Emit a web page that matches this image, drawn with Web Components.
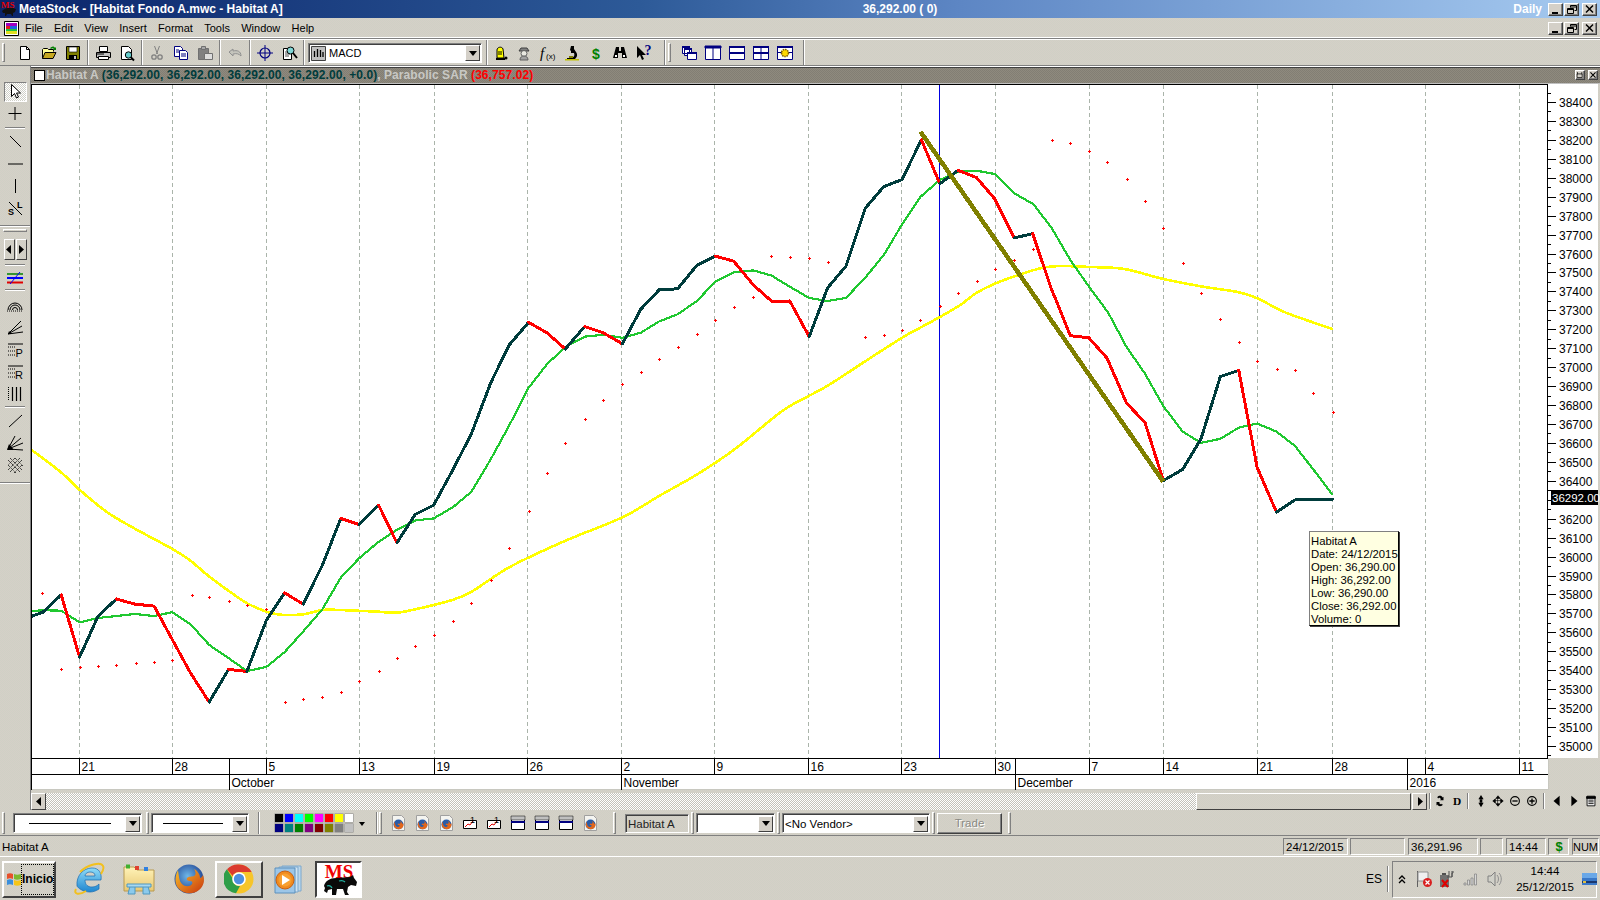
<![CDATA[<!DOCTYPE html>
<html><head><meta charset="utf-8"><title>MetaStock</title>
<style>
html,body{margin:0;padding:0;width:1600px;height:900px;overflow:hidden;background:#d2cfc7;font:11.5px "Liberation Sans",Arial,sans-serif;color:#000}
</style>
<script>
const FONT='"Liberation Sans",Arial,sans-serif';
const DITHER='background:repeating-conic-gradient(#d6cfc8 0 25%,#cfd1c5 0 50%) 0 0/2px 2px;';
function def(name,css,html){
  customElements.define(name,class extends HTMLElement{
    constructor(){super();const r=this.attachShadow({mode:'open'});
      r.innerHTML='<style>'+css+'</style>'+(typeof html==='function'?html(this):html);}
  });
}
const fx=(s)=>`<svg width="${s}" height="${s}" viewBox="0 0 32 32"><defs><radialGradient id="fg" cx=".45" cy=".4" r=".6"><stop offset="0" stop-color="#6fb7e8"/><stop offset="1" stop-color="#1d3f8f"/></radialGradient><linearGradient id="ff" x1="0" y1="0" x2="1" y2="1"><stop offset="0" stop-color="#f9c02a"/><stop offset="1" stop-color="#c8360e"/></linearGradient></defs><circle cx="16" cy="16" r="14.5" fill="url(#fg)"/><path d="M5 7C2 13 1 21 6 26c5 5 14 6 20 1 5-4 6-10 4-15-1 2-2 3-3 3 0-3-2-7-6-9 2 3 2 6 0 7-2 1-5 0-7 2-1 2 1 3 3 3 2 0 3 1 2 3-2 3-7 3-10 0-3-3-3-8-4-14z" fill="url(#ff)"/></svg>`;
const I={
 new:`<path d="M3.5 1.5h6l3 3v10h-9z" fill="#fff" stroke="#000"/><path d="M9.5 1.5v3h3" fill="none" stroke="#000"/>`,
 open:`<path d="M1.5 13.5v-9l1-1h4l1 1h5v2" fill="#ffff99" stroke="#000"/><path d="M1.5 13.5l2.500-6h11l-3 6z" fill="#c6a820" stroke="#000"/><path d="M9 3c2-2 4-2 5 0l1-1v3h-3l1-1c-1-1-2-1-3 0z" fill="#008000"/>`,
 save:`<path d="M1.500 1.500h13v13h-13z" fill="#808000" stroke="#000"/><path d="M4 2h8v5H4z" fill="#fff" stroke="#000" stroke-width=".6"/><path d="M4 10h8v5H4z" fill="#000"/><path d="M9 11h2v3H9z" fill="#c0c0c0"/>`,
 print:`<path d="M4.500 1.500h8v5h-8z" fill="#fff" stroke="#000"/><path d="M1.500 7.500h14v5h-14z" fill="#c0c0c0" stroke="#000"/><path d="M3.500 11.500h10v3h-10z" fill="#fff" stroke="#000"/><path d="M2 9h7" stroke="#000"/>`,
 prev:`<path d="M2.500 1.500h7l3 3v10h-10z" fill="#fff" stroke="#000"/><circle cx="9.500" cy="10" r="3.200" fill="#66cccc" stroke="#000"/><path d="M12 12.500l3 3" stroke="#000" stroke-width="2"/>`,
 cut:`<path d="M5.500 1l3 8m2-8l-3 8" stroke="#808080" fill="none"/><circle cx="5" cy="12" r="2.200" fill="none" stroke="#808080" stroke-width="1.300"/><circle cx="11" cy="12" r="2.200" fill="none" stroke="#808080" stroke-width="1.300"/>`,
 copy:`<path d="M1.500 1.500h6l2 2v8h-8z" fill="#fff" stroke="#000080"/><path d="M6.500 5.500h6l2 2v7h-8z" fill="#fff" stroke="#000080"/><path d="M8 9h5M8 11h5" stroke="#000080"/><path d="M3 5h3M3 7h3" stroke="#000080"/>`,
 paste:`<path d="M1.500 3.500h10v11h-10z" fill="#808080" stroke="#707070"/><path d="M4.500 1.500h4v3h-4z" fill="#a8a8a8" stroke="#707070"/><path d="M7.500 8.500h8v6h-8z" fill="#ddd" stroke="#707070"/>`,
 undo:`<path d="M2 7l4-3v2c4-1 8 0 8 5-2-2-4-3-8-2v2z" fill="#c4c4bc" stroke="#909090"/>`,
 cross:`<circle cx="8" cy="8" r="5" fill="none" stroke="#000080" stroke-width="1.200"/><path d="M8 0v16M0 8h16" stroke="#000080"/>`,
 find:`<path d="M2.500 3.500h8v11h-8z" fill="#fff" stroke="#000"/><path d="M4 7h5M4 9h5M4 11h4" stroke="#000" stroke-width=".7"/><circle cx="9.500" cy="5.500" r="3.500" fill="#7fd6d6" stroke="#000"/><path d="M12 8l4 5" stroke="#000" stroke-width="2"/>`,
 alarm:`<path d="M5 13V5c0-3 5-4 6-1l1 9z" fill="#ffff00" stroke="#000"/><path d="M4 13h9v2H4z" fill="#000"/><path d="M7 6v4M9 6v4" stroke="#000"/><circle cx="14" cy="13" r="1.500" fill="#000"/>`,
 wizard:`<path d="M3 6h10L11 3H5z" fill="#808080" stroke="#404040"/><circle cx="8" cy="8.500" r="3" fill="#e8e8e0" stroke="#606060"/><path d="M4 15c0-3 2-4 4-4s4 1 4 4z" fill="#a0a0a0" stroke="#606060"/>`,
 fx:`<text x="0" y="13" font-family="Liberation Serif,serif" font-style="italic" font-size="15" fill="#000">f</text><text x="6" y="14" font-family="Liberation Sans,sans-serif" font-size="8" fill="#000">(x)</text>`,
 micro:`<path d="M7 1h3v3l2 3c2 3 1 5-1 7H3v-1h5c2-1 3-3 2-5H7v-2l-1-1z" fill="#000"/><path d="M1 14h14v1.500H1z" fill="#c0c000"/><path d="M5 11h4v2H5z" fill="#808000"/>`,
 dollar:`<text x="8" y="13.500" text-anchor="middle" font-family="Liberation Sans,sans-serif" font-weight="700" font-size="14" fill="#008000">$</text>`,
 binoc:`<path d="M4 2h3v4h2V2h3l3 11h-5V8H6v5H1z" fill="#000"/><path d="M3 10h2v2H3zM11 10h2v2h-2z" fill="#fff"/>`,
 helpq:`<path d="M1 1l0 12 3-3 2 5 2-1-2-4h4z" fill="#000"/><text x="12" y="10" text-anchor="middle" font-family="Liberation Serif,serif" font-weight="700" font-size="14" fill="#000080">?</text>`,
 casc:`<path d="M1.500 1.500h7v7h-7zM3.500 3.500h7v7h-7z" fill="#fff" stroke="#000080"/><path d="M6.500 7.500h9v7h-9z" fill="#fff" stroke="#000080"/><path d="M1 1h8v2H1zM3 3h8v2H3zM6 7h10v2H6z" fill="#000080"/>`,
 tilev:`<path d="M.500 1.500h15v13H.500z" fill="#fff" stroke="#000080"/><path d="M0 1h16v2H0zM8 1v14" stroke="#000080" fill="#000080"/>`,
 tileh:`<path d="M.500 1.500h15v13H.500z" fill="#fff" stroke="#000080"/><path d="M0 1h16v2H0zM0 7h16v2H0z" fill="#000080"/>`,
 tile4:`<path d="M.500 1.500h15v13H.500z" fill="#fff" stroke="#000080"/><path d="M0 1h16v2H0zM0 7h16v2H0z" fill="#000080"/><path d="M8 1v14" stroke="#000080"/>`,
 tilegear:`<path d="M.500 1.500h15v13H.500z" fill="#fff" stroke="#000080"/><path d="M0 1h16v2H0zM0 7h16v1H0z" fill="#000080"/><circle cx="8" cy="8" r="3.500" fill="#ffd800" stroke="#806000" stroke-dasharray="1.500 .8" stroke-width="1.600"/>`,
 arrow:`<path d="M4.500 .5v12l3-3 2 4.500 2-1-2-4h4z" fill="#fff" stroke="#000"/>`,
 plus:`<path d="M8 1v13M1.500 7.500h13" stroke="#000"/>`,
 diag:`<path d="M3 2l11 11" stroke="#000"/>`,
 hor:`<path d="M1 8h15" stroke="#000"/>`,
 ver:`<path d="M8.500 1v14" stroke="#000"/>`,
 sl:`<path d="M2 2l13 13" stroke="#000"/><text x="10" y="7.500" font-family="Liberation Sans,sans-serif" font-weight="700" font-size="9" fill="#000">L</text><text x="1" y="15" font-family="Liberation Sans,sans-serif" font-weight="700" font-size="9" fill="#000">S</text>`,
 trend:`<path d="M0 4h16" stroke="#008000" stroke-width="1.500"/><path d="M0 8h16" stroke="#0000ff" stroke-width="2"/><path d="M0 12.500h16" stroke="#e00000" stroke-width="2"/><path d="M3 14L13 2" stroke="#0000ff"/>`,
 arcs:`<path d="M1 12a7 7 0 0 1 14 0M3 12a5 5 0 0 1 10 0M5.500 12a2.500 2.500 0 0 1 5 0" fill="none" stroke="#000"/><path d="M0 13h16" stroke="#000" stroke-dasharray="1 1"/>`,
 fan:`<path d="M1 14L14 1M1 14L15 6M1 14l15-2" stroke="#000" fill="none"/><path d="M1 14h4l-3-3z" fill="#000"/>`,
 retP:`<path d="M1 2h15" stroke="#000"/><path d="M1 5h8M1 9h8M1 13h8" stroke="#000" stroke-dasharray="1 1"/><text x="8.500" y="14.500" font-family="Liberation Sans,sans-serif" font-size="11" fill="#000">P</text>`,
 retR:`<path d="M1 2h15" stroke="#000"/><path d="M1 5h8M1 9h8M1 13h8" stroke="#000" stroke-dasharray="1 1"/><text x="8" y="14.500" font-family="Liberation Sans,sans-serif" font-size="11" fill="#000">R</text>`,
 cyc:`<path d="M1.500 1v14" stroke="#000" stroke-dasharray="1 1"/><path d="M5.500 1v14M9.500 1v14M13.500 1v14" stroke="#000" stroke-width="1.200"/>`,
 line:`<path d="M2 14L15 2" stroke="#000"/>`,
 bigfan:`<path d="M1 14L8 1M1 14L14 3M1 14L16 8M1 14l15 1" stroke="#000" fill="none"/><path d="M0 15h7L2 9z" fill="#000"/>`,
 hatch:`<path d="M1 3l12 12M1 8l8 8M3 1l12 12M8 1l8 8M15 3L3 15M15 8l-8 8M13 1L1 13M8 1L1 8" stroke="#000" stroke-dasharray="1 1" fill="none"/>`,
 vsz:`<path d="M8 1l3 5H5zM8 15l3-5H5z" fill="#000"/><path d="M6.500 6h3v4h-3z" fill="#000"/>`,
 refr:`<path d="M5 4c0-2 5-3 6 0l1-1v4H8l1-1C8 4 6.500 4 6 5zM11 12c0 2-5 3-6 0l-1 1V9h4L7 10c1 2 2.500 2 3 1z" fill="#000"/>`,
 dbtn:`<text x="8" y="13" text-anchor="middle" font-family="Liberation Serif,serif" font-weight="700" font-size="13" fill="#000">D</text>`,
 move:`<path d="M8 2l2.500 3h-5zM8 14l2.500-3h-5zM2 8l3-2.500v5zM14 8l-3-2.500v5zM3 7.500h10M7.500 3v10" stroke="#000" stroke-width=".7" fill="#000"/>`,
 zout:`<circle cx="8" cy="8" r="5" fill="none" stroke="#000" stroke-width="1.300"/><path d="M5 8h6" stroke="#000" stroke-width="1.500"/>`,
 zin:`<circle cx="8" cy="8" r="5" fill="none" stroke="#000" stroke-width="1.300"/><path d="M5 8h6M8 5v6" stroke="#000" stroke-width="1.500"/>`,
 larr:`<path d="M11 2v12L4 8z" fill="#000"/>`,
 rarr:`<path d="M5 2v12l7-6z" fill="#000"/>`,
 list:`<path d="M3.500 2.500h9v11h-9z" fill="#fff" stroke="#000"/><path d="M3 3h10v2H3zM5 7h6M5 9h6M5 11h6" stroke="#000"/>`,
 fxdoc:`<path d="M2.500 .5h9l3 3v12h-12z" fill="#f4f4f0" stroke="#a0a0a0"/><g transform="translate(3 4) scale(.34)"><circle cx="16" cy="16" r="14.500" fill="#2a5ca8"/><path d="M5 7C2 13 1 21 6 26c5 5 14 6 20 1 5-4 6-10 4-15-1 2-2 3-3 3 0-3-2-7-6-9 2 3 2 6 0 7-2 1-5 0-7 2-1 2 1 3 3 3 2 0 3 1 2 3-2 3-7 3-10 0-3-3-3-8-4-14z" fill="#e2661a"/></g>`,
 chart1:`<path d="M1.500 5.500h13v8h-13z" fill="#fff" stroke="#000"/><path d="M3 12l3-3 2 1 3-4" stroke="#e00000" fill="none"/><text x="8" y="8" font-family="Liberation Sans,sans-serif" font-size="9" fill="#000">1</text>`,
 win1:`<path d="M1.500 1.500h13v13h-13z" fill="#fff" stroke="#000"/><path d="M1 1h14v4H1z" fill="#c0c0c0" stroke="#000" stroke-width=".5"/><path d="M1 6h14v2H1z" fill="#000080"/>`,
};
def('ms-tool',`:host{display:flex;align-items:center;justify-content:center;flex:none;height:100%}svg{display:block;overflow:visible}`,
 el=>{const w=el.getAttribute('w')||24;const s=el.getAttribute('s')||16;return `<style>:host{width:${w}px}</style><svg width="${s}" height="${s}" viewBox="0 0 16 16">${I[el.getAttribute('i')]||''}</svg>`});
def('ms-sep',`:host{display:block;flex:none;width:2px;box-sizing:border-box;border-left:1px solid #808080;border-right:1px solid #fff;height:100%}`,'');
def('ms-grip',`:host{display:block;flex:none;width:3px;box-sizing:border-box;border:1px solid;border-color:#fff #808080 #808080 #fff;height:calc(100% - 6px);margin:3px 0}`,'');
const wb={min:`<path d="M2 8h6v2H2z" fill="#000"/>`,res:`<path d="M4.500 1.500h6v5h-2M4.500 3h6" fill="none" stroke="#000"/><path d="M4.500 1.500v2M1.500 4.500h6v5h-6zM1.500 5.500h6" fill="none" stroke="#000"/>`,close:`<path d="M2 1.500l7 7M9 1.500l-7 7" stroke="#000" stroke-width="1.500"/>`,dock:`<path d="M1.500 3.500h7v5h-7zM8 1v3M2 1v3" fill="none" stroke="#000"/>`};
def('ms-winbtn',`:host{display:flex;align-items:center;justify-content:center;flex:none;box-sizing:border-box;background:#d4d0c8;border:1px solid;border-color:#fff #404040 #404040 #fff;box-shadow:inset -1px -1px 0 #808080}svg{display:block}`,
 el=>{const w=el.getAttribute('w')||15,h=el.getAttribute('h')||13;return `<style>:host{width:${w}px;height:${h}px}</style><svg width="11" height="10" viewBox="0 0 11 10">${wb[el.getAttribute('t')]}</svg>`});
def('ms-titlebar',`:host{display:flex;align-items:center;height:18px;flex:none;position:relative;background:linear-gradient(90deg,#0a246a 0,#2d5a98 40%,#5d86c4 60%,#a6caf0 100%);color:#fff;font:700 12px ${FONT}}
 .name{margin-left:1px}.mid{position:absolute;left:200px;right:0;text-align:center;pointer-events:none}.daily{margin-left:auto;margin-right:6px;color:#fff}
 .b{display:flex;align-items:center;margin-right:3px}.b ms-winbtn:nth-child(2){margin:0 3px 0 1px}svg{display:block;flex:none}`,
 `<svg width="18" height="18" viewBox="0 0 18 18"><path d="M2 11c2-3 8-4 11-3l3 1-1 3-2 1v3h-1l-1-2H7l-1 2H5v-3H3z" fill="#111"/><text x="1" y="8" font-family="Liberation Serif,serif" font-weight="700" font-size="9" fill="#e00000">MS</text></svg>
 <span class="name">MetaStock - [Habitat Fondo A.mwc - Habitat A]</span><span class="mid">36,292.00 ( 0)</span><span class="daily">Daily</span>
 <div class="b"><ms-winbtn t="min"></ms-winbtn><ms-winbtn t="res"></ms-winbtn><ms-winbtn t="close"></ms-winbtn></div>`);
def('ms-menubar',`:host{display:flex;align-items:center;height:21px;flex:none;box-sizing:border-box;border-bottom:1px solid #808080;box-shadow:inset 0 -1px 0 #fff;font:11px ${FONT}}
 svg{margin:0 0 0 4px;display:block;flex:none}span{margin-left:11.3px}span:first-of-type{margin-left:6px}.b{display:flex;margin-left:auto;margin-right:3px}.b ms-winbtn:nth-child(2){margin:0 3px 0 1px}`,
 `<svg width="15" height="15" viewBox="0 0 15 15"><path d="M.5.5h14v14H.5z" fill="#fff" stroke="#000"/><path d="M2 2h11v3H2z" fill="#a000c0"/><path d="M2 5h4v3H2z" fill="#e02020"/><path d="M6 5h7v3H6z" fill="#2060e0"/><path d="M2 8h11v2H2z" fill="#20c040"/><path d="M2 10h11v3H2z" fill="#e0e020"/></svg>
 <span>File</span><span>Edit</span><span>View</span><span>Insert</span><span>Format</span><span>Tools</span><span>Window</span><span>Help</span>
 <div class="b"><ms-winbtn t="min"></ms-winbtn><ms-winbtn t="res"></ms-winbtn><ms-winbtn t="close"></ms-winbtn></div>`);
def('ms-combo',`:host{display:flex;flex:none;box-sizing:border-box;height:20px;background:#fff;border:1px solid;border-color:#808080 #fff #fff #808080;box-shadow:inset 1px 1px 0 #404040;font:11.5px ${FONT};align-items:center;position:relative;padding:1px 0 0 2px}
 .t{flex:1;display:flex;align-items:center;white-space:nowrap;overflow:hidden}.d{flex:none;width:15px;height:16px;margin:0 1px 0 0;box-sizing:border-box;background:#d4d0c8;border:1px solid;border-color:#fff #404040 #404040 #fff;display:flex;align-items:center;justify-content:center}
 .d:after{content:"";border:4px solid transparent;border-top:5px solid #000;border-bottom:0}`,
 el=>`<style>:host{width:${el.getAttribute('w')}px}</style><div class="t"><slot></slot></div><div class="d"></div>`);
def('ms-toolbar',`:host{display:flex;align-items:center;height:27px;flex:none;box-sizing:border-box;padding:1px 0 0 2px;border-bottom:1px solid #808080;box-shadow:inset 0 1px 0 #fff}
 .ic{flex:none;margin-right:3px;display:block}`,
 `<ms-grip></ms-grip><ms-tool w="8" style="visibility:hidden"></ms-tool>
 <ms-tool i="new" w="24"></ms-tool><ms-tool i="open"></ms-tool><ms-tool i="save"></ms-tool><ms-sep style="margin:0 2px"></ms-sep>
 <ms-tool i="print"></ms-tool><ms-tool i="prev"></ms-tool><ms-sep style="margin:0 2px"></ms-sep>
 <ms-tool i="cut"></ms-tool><ms-tool i="copy"></ms-tool><ms-tool i="paste"></ms-tool><ms-sep style="margin:0 2px"></ms-sep>
 <ms-tool i="undo"></ms-tool><ms-sep style="margin:0 2px"></ms-sep>
 <ms-tool i="cross"></ms-tool><ms-tool i="find"></ms-tool><ms-sep style="margin:0 1px 0 2px"></ms-sep>
 <ms-combo w="174" style="margin-left:2px"><svg class="ic" width="15" height="15" viewBox="0 0 15 15"><path d="M.5.5h14v14H.5z" fill="#c0c0c0" stroke="#404040"/><path d="M3.500 5v6M6.500 3v8M9.500 4v7M12 6v5" stroke="#000" stroke-width="1.300"/></svg><span style="font-size:11px">MACD</span></ms-combo>
 <ms-sep style="margin:0 0 0 4px"></ms-sep>
 <ms-tool i="alarm" w="24"></ms-tool><ms-tool i="wizard" w="24"></ms-tool><ms-tool i="fx" w="24"></ms-tool><ms-tool i="micro" w="24"></ms-tool><ms-tool i="dollar" w="24"></ms-tool><ms-tool i="binoc" w="24"></ms-tool><ms-tool i="helpq" w="24"></ms-tool>
 <ms-sep style="margin:0 1px 0 8px"></ms-sep><ms-grip style="margin-left:1px"></ms-grip>
 <ms-tool i="casc" w="24" style="margin-left:6px"></ms-tool><ms-tool i="tilev"></ms-tool><ms-tool i="tileh"></ms-tool><ms-tool i="tile4"></ms-tool><ms-tool i="tilegear"></ms-tool>
 <ms-sep style="margin-left:6px"></ms-sep>`);
def('ms-sidepanel',`:host{display:flex;flex-direction:column;align-items:center;width:31px;flex:none;box-sizing:border-box;padding-top:16px;border-right:1px solid #808080}
 .sel{box-sizing:border-box;width:23px;height:20px;border:1px solid;border-color:#808080 #fff #fff #808080;background:repeating-conic-gradient(#fff 0 25%,#d0d0c8 0 50%) 0 0/2px 2px}
 ms-tool{height:22px;width:24px}.hr{flex:none;width:20px;height:2px;border-top:1px solid #808080;border-bottom:1px solid #fff;box-sizing:border-box;margin:3px 0 4px}
 .wide{width:30px;margin:6px 0 2px}.g{width:24px;height:3px;border:1px solid;border-color:#fff #808080 #808080 #fff;box-sizing:border-box;margin:0 0 7px}
 .pair{display:flex;gap:1px;height:22px;flex:none}.pair div{width:11px;height:21px;box-sizing:border-box;border:1px solid;border-color:#fff #404040 #404040 #fff;display:flex;align-items:center;justify-content:center}`,
 `<div class="sel"><ms-tool i="arrow" style="height:18px;width:21px"></ms-tool></div><ms-tool i="plus" style="height:24px"></ms-tool><div class="hr" style="margin:1px 0 2px"></div>
 <ms-tool i="diag"></ms-tool><ms-tool i="hor"></ms-tool><ms-tool i="ver"></ms-tool><ms-tool i="sl"></ms-tool>
 <div class="hr wide"></div><div class="g"></div>
 <div class="pair"><div><svg width="6" height="9" viewBox="0 0 6 9"><path d="M5 0v9L0 4.500z"/></svg></div><div><svg width="6" height="9" viewBox="0 0 6 9"><path d="M1 0v9l5-4.500z"/></svg></div></div>
 <div class="hr"></div><ms-tool i="trend" style="height:16px"></ms-tool><div class="hr" style="margin:3px 0 4px"></div>
 <ms-tool i="arcs"></ms-tool><ms-tool i="fan"></ms-tool><ms-tool i="retP"></ms-tool><ms-tool i="retR"></ms-tool><ms-tool i="cyc"></ms-tool><div class="hr" style="margin:1px 0 2px"></div>
 <ms-tool i="line"></ms-tool><ms-tool i="bigfan"></ms-tool><ms-tool i="hatch"></ms-tool><div class="hr wide" style="margin:6px 0 0"></div>`);
def('ms-chart-title',`:host{display:flex;align-items:center;height:18px;flex:none;box-sizing:border-box;border-top:1px solid #fff;border-bottom:1px solid #c0c0c0;box-shadow:inset 0 1px 0 #404040;background:repeating-conic-gradient(#8f8a7e 0 25%,#827e74 0 50%) 0 0/2px 2px;padding-left:3px;font:700 12px ${FONT};letter-spacing:.07px;color:#c8c8c4;white-space:nowrap}
 .chk{width:9px;height:9px;background:#fff;border:1px solid #000;margin-right:1px;flex:none}b{color:#003c3c}i{font-style:normal;color:#ff0000}.r{margin-left:auto;display:flex;gap:3px;margin-right:2px}`,
 `<span class="chk"></span><span>Habitat A <b>(36,292.00, 36,292.00, 36,292.00, 36,292.00, +0.0)</b>, Parabolic SAR <i>(36,757.02)</i></span>
 <div class="r"><ms-winbtn t="dock" w="10" h="10"></ms-winbtn><ms-winbtn t="close" w="10" h="10"></ms-winbtn></div>`);
def('ms-tooltip',`:host{position:absolute;left:1278px;top:447px;width:90px;height:95px;box-sizing:border-box;padding:3px 0 0 1px;background:#ffffe1;border:1px solid #000;border-left-color:#808080;border-top-color:#808080;box-shadow:1px 1px 0 #404040;font:11.3px/13px ${FONT};white-space:nowrap}`,`<slot></slot>`);
const K=1600/1568;
const close=[[31,604],[42,600],[60,583],[78,644],[96,604],[114,587],[132,592],[151,594],[169,627],[187,660],[205,688],[224,656],[242,658],[261,608],[279,581],[297,592],[316,554],[334,508],[352,514],[371,495],[389,532],[407,504],[425,495],[444,460],[462,425],[481,375],[499,338],[518,316],[536,326],[554,342],[573,320],[591,326],[610,337],[628,303],[646,284],[664,283],[683,260],[701,251],[719,256],[738,279],[756,295],[774,295],[793,330],[811,282],[829,261],[848,204],[866,183],[884,176],[903,137],[921,180],[939,167],[957,174],[975,195],[994,233],[1012,229],[1030,282],[1049,329],[1067,331],[1085,351],[1104,395],[1122,414],[1140,471],[1159,460],[1177,430],[1196,369],[1214,363],[1232,458],[1251,502],[1269,490],[1287,489],[1306,489]];
const green=[[31,599],[42,598],[60,598.5],[78,610],[96,605.6],[114,603.7],[132,601.7],[151,603.7],[169,600],[187,612],[205,632],[224,645],[242,657.6],[261,653.7],[279,639],[297,619],[316,597],[334,566],[352,547],[371,531],[389,519],[407,510],[425,508],[444,497],[462,482],[481,450],[499,417],[518,380],[536,357],[554,340],[573,330],[591,328],[610,331],[628,326],[646,315],[664,308],[683,295],[701,276],[719,267],[738,265],[756,270],[774,281],[793,292],[811,295],[829,292],[848,272],[866,250],[884,220],[902,193],[921,176.4],[941,167.6],[957,167.3],[975,170.5],[995,190],[1012.6,200],[1030.7,223.4],[1049,255],[1068,282],[1086,306.4],[1104,340],[1122,366],[1140,398],[1159,423],[1177,434],[1196,430],[1214,419],[1232,415],[1251,423],[1269,437],[1287,460],[1306,485]];
const yellow=[[31,441],[60,463],[78,480],[105,502],[132,518],[169,538],[186,549],[205,565],[225.4,580],[241.8,591],[261.4,599.5],[277.3,602.7],[297,602],[316.5,597.8],[333,597.8],[369,599.4],[388.7,600.4],[408,596.9],[441,588.7],[462,580],[499,556],[554,530],[610,507],[646,486],[683,465],[719,441],[756,411],[774,398],[811,378],[848,354],[884,331],[902,321],[921,310.7],[941,299],[957,287],[975,278],[998,269.5],[1022,262.3],[1039,260.7],[1068,261.7],[1102,263.6],[1140,273.4],[1179,281],[1212,286],[1231.5,292],[1261,306.7],[1306,322.4]];
const sar=[[41,581],[60,656],[78,654],[96,653],[114,652],[133,650],[151,649],[169,647],[188,583],[205,585],[224,589],[242,593],[261,597],[279,688],[297,685],[316,683],[334,678],[352,667],[371,658],[389,645],[407,633],[425,622],[444,609],[462,591],[481,568],[499,537],[518,501],[536,464],[554,434],[573,411],[591,392],[610,376],[628,365],[646,352],[664,340],[683,327],[701,314],[719,301],[738,291],[756,251],[774,252],[793,253],[811,257],[829,260],[848,330],[866,328],[884,323],[902,314],[921,300],[939,287],[957,275],[975,264],[994,255],[1012,244],[1031,137],[1049,140],[1067,148],[1085,159],[1104,175],[1122,197],[1140,223],[1159,258],[1177,287],[1196,313],[1214,335],[1232,354],[1251,362],[1269,363],[1287,385],[1306,404]];
const P=a=>a.map(p=>(p[0]*K).toFixed(1)+','+(p[1]*K).toFixed(1)).join(' ');
function smooth(a){const q=a.map(p=>[p[0]*K,p[1]*K]);let d=`M${q[0][0].toFixed(1)} ${q[0][1].toFixed(1)}`;
 for(let i=0;i<q.length-1;i++){const p0=q[i-1]||q[i],p1=q[i],p2=q[i+1],p3=q[i+2]||p2;
  const c1=[p1[0]+(p2[0]-p0[0])/6,p1[1]+(p2[1]-p0[1])/6],c2=[p2[0]-(p3[0]-p1[0])/6,p2[1]-(p3[1]-p1[1])/6];
  d+=`C${c1[0].toFixed(1)} ${c1[1].toFixed(1)} ${c2[0].toFixed(1)} ${c2[1].toFixed(1)} ${p2[0].toFixed(1)} ${p2[1].toFixed(1)}`;}
 return d;}
function chartSvg(){
 const grid=[79.2,172.2,266.2,359.2,434.3,527.3,621.3,714.3,808.3,901.3,995.3,1089.3,1163.3,1257.3,1332.3,1425.3,1519.3];
 const days=['21','28','5','13','19','26','2','9','16','23','30','7','14','21','28','4','11'];
 let s=`<svg xmlns="http://www.w3.org/2000/svg" width="1569" height="706" viewBox="31 84 1569 706" font-family='${FONT}' font-size="12">`;
 s+=`<rect x="31" y="84" width="1567" height="674" fill="#fff"/><rect x="31" y="758" width="1517" height="32" fill="#fff"/>`;
 s+=`<path d="M31 789.500H1548.500V758" fill="none" stroke="#c8c8c0"/>`;
 grid.forEach(x=>{const X=Math.round(x)+.5;s+=`<path d="M${X} 85V758" stroke="#aab4aa" stroke-dasharray="4 3"/>`;});
 s+=`<path d="M939.500 85V758" stroke="#0000e0"/>`;
 s+=`<g shape-rendering="crispEdges">`;
 s+=`<path d="${smooth(yellow)}" fill="none" stroke="#ffff00" stroke-width="2.600"/>`;
 sar.forEach(p=>{const x=Math.round(p[0]*K),y=Math.round(p[1]*K);s+=`<rect x="${x-1}" y="${y}" width="3" height="1" fill="#ff0000"/><rect x="${x}" y="${y-1}" width="1" height="3" fill="#ff0000"/>`;});
 s+=`<polyline points="${P(green)}" fill="none" stroke="#20c830" stroke-width="2.200" stroke-linejoin="round"/>`;
 let prev='#003c3c';
 for(let i=1;i<close.length;i++){const a=close[i-1],b=close[i];
   const c=b[1]>a[1]?'#ff0000':b[1]<a[1]?'#003c3c':prev;prev=c;
   s+=`<line x1="${(a[0]*K).toFixed(1)}" y1="${(a[1]*K).toFixed(1)}" x2="${(b[0]*K).toFixed(1)}" y2="${(b[1]*K).toFixed(1)}" stroke="${c}" stroke-width="3" stroke-linecap="round"/>`;}
 s+=`<line x1="${902*K}" y1="${129*K}" x2="${1140*K}" y2="${472*K}" stroke="#808000" stroke-width="4.500"/></g>`;
 s+=`<path d="M1547.500 84V758" stroke="#000" stroke-width="1"/>`;
 for(let p=38450;p>=34950;p-=50){const y=102+(38400-p)*.1894;const Y=Math.round(y)+.5;
   if(p%100===0){s+=`<path d="M1547 ${Y}h9" stroke="#000"/>`; if(p!==36300) s+=`<text x="1559" y="${Y+4}">${p}</text>`;}
   else s+=`<path d="M1547 ${Y}h4" stroke="#000"/>`;}
 s+=`<rect x="1551" y="490" width="47" height="15" fill="#000"/><text x="1552" y="501.500" fill="#fff" font-size="11.500">36292.00</text>`;
 s+=`<path d="M31 758.500H1548M31 774.500H1548M31.500 84V790" stroke="#000"/>`;
 s+=`<path d="M31 84.500H1547" stroke="#000" stroke-width="1"/>`;
 grid.forEach((x,i)=>{const X=Math.round(x)+.5;s+=`<path d="M${X} 758V774" stroke="#000"/><text x="${X+2}" y="771">${days[i]}</text>`;});
 [[229,'October'],[621,'November'],[1015,'December'],[1407,'2016']].forEach(m=>{const X=m[0]+.5;s+=`<path d="M${X} 758V790" stroke="#000"/><text x="${X+2}" y="787">${m[1]}</text>`;});
 return s+'</svg>';
}
def('ms-chart',`:host{display:block;flex:none;height:706px;position:relative}svg{display:block}`,()=>chartSvg()+`<slot></slot>`);
def('ms-scrollrow',`:host{display:flex;align-items:center;height:18px;flex:none;margin-top:2px}
 .a{flex:none;width:15px;height:17px;box-sizing:border-box;background:#d4d0c8;border:1px solid;border-color:#fff #404040 #404040 #fff;display:flex;align-items:center;justify-content:center}
 .tr{height:17px;flex:none;width:1150px;background:repeating-conic-gradient(#fff 0 25%,#c4c2ba 0 50%) 0 0/2px 2px}
 .th{height:17px;flex:none;width:215px;box-sizing:border-box;border:1px solid;border-color:#fff #404040 #404040 #fff}
 ms-tool{height:16px}ms-sep{height:16px}`,
 `<div class="a"><svg width="6" height="9" viewBox="0 0 6 9"><path d="M5 0v9L0 4.500z"/></svg></div><div class="tr"></div><div class="th"></div>
 <div class="a" style="margin-left:1px"><svg width="6" height="9" viewBox="0 0 6 9"><path d="M1 0v9l5-4.500z"/></svg></div><ms-sep style="margin:0 0 0 2px"></ms-sep>
 <ms-tool i="refr" w="17" s="14"></ms-tool><ms-tool i="dbtn" w="17" s="14"></ms-tool><ms-sep style="margin:0 3px 0 2px"></ms-sep>
 <ms-tool i="vsz" w="17" s="14"></ms-tool><ms-tool i="move" w="17" s="14"></ms-tool><ms-tool i="zout" w="17" s="14"></ms-tool><ms-tool i="zin" w="17" s="14"></ms-tool><ms-sep style="margin:0 3px"></ms-sep>
 <ms-tool i="larr" w="17" s="14"></ms-tool><ms-tool i="rarr" w="17" s="14"></ms-tool><ms-tool i="list" w="17" s="14"></ms-tool>`);
const cols=['#000','#00f','#0ff','#0f0','#f0f','#f00','#ff0','#fff','#000080','#008080','#008000','#800080','#800000','#808000','#808080','#c0c0c0'];
def('ms-drawbar',`:host{display:flex;align-items:center;height:26px;flex:none;box-sizing:border-box;border-bottom:1px solid #808080;padding:1px 0 0 2px;font:11.5px ${FONT}}
 ms-combo{height:20px}.ln{display:block;height:1px;background:#000}.pal{display:grid;grid-template-columns:repeat(8,8px);grid-auto-rows:8px;gap:2px 2px;flex:none;margin-left:15px}.pal i{display:block;border:0;box-shadow:0 0 0 .5px #888}
 .ar{flex:none;border:3px solid transparent;border-top:4px solid #000;border-bottom:0;margin:2px 0 0 6px}
 .fld{flex:none;width:64px;height:19px;box-sizing:border-box;border:1px solid;border-color:#808080 #fff #fff #808080;box-shadow:inset 1px 1px 0 #404040;padding:1px 0 0 2px;display:flex;align-items:center;color:#222}
 .trade{flex:none;width:65px;height:21px;box-sizing:border-box;border:1px solid;border-color:#fff #404040 #404040 #fff;box-shadow:inset -1px -1px 0 #808080;display:flex;align-items:center;justify-content:center;color:#8a8a84;text-shadow:1px 1px 0 #fff}
 ms-tool{height:100%}ms-sep,ms-grip{height:22px;margin-top:0;margin-bottom:0}`,
 `<ms-grip></ms-grip><ms-combo w="129" style="margin-left:8px"><span class="ln" style="width:82px;margin-left:13px"></span></ms-combo><ms-grip style="margin-left:4px"></ms-grip>
 <ms-combo w="98" style="margin-left:2px"><span class="ln" style="width:60px;margin-left:9px"></span></ms-combo><ms-sep style="margin-left:9px"></ms-sep>
 <div class="pal">${cols.map(c=>`<i style="background:${c}"></i>`).join('')}</div><span class="ar"></span><ms-sep style="margin-left:11px"></ms-sep><ms-grip style="margin-left:1px"></ms-grip>
 <ms-tool i="fxdoc" w="24" style="margin-left:4px"></ms-tool><ms-tool i="fxdoc"></ms-tool><ms-tool i="fxdoc"></ms-tool><ms-tool i="chart1"></ms-tool><ms-tool i="chart1"></ms-tool><ms-tool i="win1"></ms-tool><ms-tool i="win1"></ms-tool><ms-tool i="win1"></ms-tool><ms-tool i="fxdoc"></ms-tool>
 <ms-grip style="margin-left:11px"></ms-grip><div class="fld" style="margin-left:9px">Habitat A</div><ms-grip style="margin-left:2px"></ms-grip>
 <ms-combo w="79" style="margin-left:2px"></ms-combo><ms-grip style="margin-left:2px"></ms-grip><ms-combo w="148" style="margin-left:2px"><span>&lt;No Vendor&gt;</span></ms-combo><ms-grip style="margin-left:2px"></ms-grip>
 <div class="trade" style="margin-left:2px">Trade</div><ms-grip style="margin-left:6px"></ms-grip>`);
def('ms-panel',`:host{display:flex;align-items:center;flex:none;box-sizing:border-box;height:17px;border:1px solid;border-color:#808080 #fff #fff #808080;padding:0 1px 0 2px;font:11.5px ${FONT};white-space:nowrap;overflow:hidden}`,
 el=>`<style>:host{width:${el.getAttribute('w')}px;margin-right:${el.getAttribute('m')||2}px}</style><slot></slot>`);
def('ms-statusbar',`:host{display:flex;align-items:center;height:21px;flex:none;box-sizing:border-box;border-bottom:1px solid #fff;padding:1px 1px 0 2px;font:11.5px ${FONT}}span{margin-right:auto}`,
 `<span>Habitat A</span><ms-panel w="65">24/12/2015</ms-panel><ms-panel w="55" m="3"></ms-panel><ms-panel w="70">36,291.96</ms-panel><ms-panel w="23" m="3"></ms-panel><ms-panel w="40">14:44</ms-panel>
 <ms-panel w="21" m="3"><b style="color:#008000;font-size:13px;margin:auto">$</b></ms-panel><ms-panel w="27" m="0" style="padding:0;font-size:11px;justify-content:center">NUM</ms-panel>`);
def('ms-taskicon',`:host{display:flex;align-items:center;justify-content:center;flex:none;box-sizing:border-box;width:50px;height:37px;border:2px solid transparent}
 :host([raised]){border-color:#fff #404040 #404040 #fff}:host([pressed]){border-color:#404040 #fff #fff #404040;background:#fff}`,`<slot></slot>`);
def('ms-start',`:host{display:flex;align-items:center;flex:none;box-sizing:border-box;width:54px;height:37px;border:2px solid;border-color:#fff #404040 #404040 #fff;padding-left:2px;font:700 12px ${FONT}}
 svg{display:block;flex:none}span{display:flex;align-items:center;height:31px;box-sizing:border-box;outline:1px dotted #000;outline-offset:-1px;padding:0 1px;margin-left:-2px}`,
 `<svg width="17" height="16" viewBox="0 0 17 16"><path d="M1 3c2-1 4-1 6 0v5C5 7 3 7 1 8z" fill="#e8502a"/><path d="M8 3c2 1 4 1 7 0v5c-3 1-5 1-7 0z" fill="#7db82e"/><path d="M1 9c2-1 4-1 6 0v5c-2-1-4-1-6 0z" fill="#3a8fdc"/><path d="M8 9c2 1 4 1 7 0v5c-3 1-5 1-7 0z" fill="#f5c518"/></svg><span>Inicio</span>`);
def('ms-taskbar',`:host{display:flex;align-items:center;height:43px;flex:none;box-sizing:border-box;padding:1px 3px 0 2px;font:11.5px ${FONT}}
 .tray{display:flex;align-items:center;flex:none;height:37px;box-sizing:border-box;width:205px;border:1px solid;border-color:#808080 #fff #fff #808080;padding-left:0;position:relative}
 .es{margin-left:auto;margin-right:5px;font-size:12px}.sp{width:2px;height:26px;border-left:1px solid #808080;border-right:1px solid #fff;box-sizing:border-box;margin-right:3px}
 .clk{width:72px;text-align:center;line-height:16px;font-size:11.5px;margin-left:6px;flex:none}svg{display:block;flex:none}`,
 `<ms-start></ms-start><ms-taskicon style="margin-left:8px"><svg width="34" height="34" viewBox="0 0 34 34"><defs><linearGradient id="ie" x1="0" y1="0" x2="0" y2="1"><stop offset="0" stop-color="#8fdcf8"/><stop offset="1" stop-color="#1f86d0"/></linearGradient></defs><path d="M5 24C4 14 11 6 20 6c7 0 10 5 9 12H13c0 5 3 7 7 7 3 0 5-1 7-3l0 5c-3 2-6 3-9 3-7 0-12-4-13-6zM13 14h10c0-3-2-4-5-4-3 0-5 2-5 4z" fill="url(#ie)" stroke="#1a6cb0" stroke-width=".7"/><path d="M4 27C1 33 8 33 14 29M8 10C15 3 29-1 31 4c1 2 0 5-2 8" fill="none" stroke="#f2c01e" stroke-width="2"/></svg></ms-taskicon>
 <ms-taskicon><svg width="34" height="32" viewBox="0 0 34 32"><defs><linearGradient id="fo" x1="0" y1="0" x2="0" y2="1"><stop offset="0" stop-color="#fff3b8"/><stop offset="1" stop-color="#e8c874"/></linearGradient></defs><path d="M2 4h10l3 3h17v21H2z" fill="url(#fo)" stroke="#b89a50"/><path d="M4 1.500h4v4H4z" fill="#40b030"/><path d="M13 3h4v4h-4z" fill="#e04030"/><path d="M22 4h4v4h-4z" fill="#3080e0"/><path d="M8 23h5v8H6zM21 23h5l2 8h-7z" fill="#8ccaec" stroke="#5098c0"/><path d="M5 21h24v3H5z" fill="#a8d8f0" stroke="#5098c0"/></svg></ms-taskicon>
 <ms-taskicon>${fx(32)}</ms-taskicon>
 <ms-taskicon raised style="width:48px;margin:0 1px"><svg width="30" height="30" viewBox="0 0 30 30"><circle cx="15" cy="15" r="14.500" fill="#f7c52a"/><path d="M15 .5A14.500 14.500 0 0 1 27.600 8H15a7 7 0 0 0-6.300 4L3 5.300A14.500 14.500 0 0 1 15 .5z" fill="#db3b2f"/><path d="M2.900 5.200L9 15a6 6 0 0 0 7 7l-4 7.300A14.500 14.500 0 0 1 2.900 5.200z" fill="#2e9e48"/><circle cx="15" cy="15" r="6.800" fill="#fff"/><circle cx="15" cy="15" r="5.200" fill="#4d8fe0"/></svg></ms-taskicon>
 <ms-taskicon style="margin-left:-1px"><svg width="30" height="30" viewBox="0 0 30 30"><path d="M9 2h19v25H9z" fill="#bcd8ee" stroke="#7ca8cc"/><path d="M6 3h19v25H6z" fill="#cfe4f4" stroke="#7ca8cc"/><path d="M2 4h20v25H2z" fill="#9cc6e8" stroke="#5c90bc"/><circle cx="12" cy="16" r="9" fill="#f08a1e" stroke="#c86010"/><circle cx="12" cy="16" r="6.500" fill="#f8a030"/><path d="M9 11l8 5-8 5z" fill="#fff"/></svg></ms-taskicon>
 <ms-taskicon pressed style="margin-left:2px;width:47px"><svg width="42" height="33" viewBox="0 0 42 33" style="overflow:visible"><text x="21" y="15" text-anchor="middle" font-family="Liberation Serif,serif" font-weight="700" font-size="19" fill="#f00000">MS</text><path d="M6 23c1-5 6-8 12-8 5 0 10-1 14-1l3-2 1 3 3 4-1 4-5-1-3 2-1 5 2 3h-4l-2-6h-6l-1 6h-4v-6l-4 1-1 3-3-2 1-3z" fill="#0a0a0a"/><path d="M9 23c2-1 4 0 5 2M21 18c3-1 5 0 6 1" stroke="#20b0a0" stroke-width="1.300" fill="none"/></svg></ms-taskicon>
 <span class="es">ES</span><span class="sp"></span>
 <div class="tray"><svg width="12" height="12" viewBox="0 0 12 12" style="margin-left:3px"><path d="M3 6l3-3 3 3M3 10l3-3 3 3" fill="none" stroke="#000" stroke-width="1.300"/></svg>
 <svg width="18" height="18" viewBox="0 0 18 18" style="margin-left:7px"><path d="M2.500 1v16" stroke="#606060"/><path d="M3 2h10v9H3z" fill="#f0f0f0" stroke="#909090"/><circle cx="12.500" cy="12.500" r="4.500" fill="#d82020"/><path d="M10.500 10.500l4 4m0-4l-4 4" stroke="#fff" stroke-width="1.300"/></svg>
 <svg width="16" height="18" viewBox="0 0 16 18" style="margin-left:6px"><path d="M1 5h9v12H1z" fill="#707070"/><path d="M3 3h4v2H3z" fill="#505050"/><path d="M8 7h5V3h1v-2M10 7V1M13 7V1" stroke="#505050" fill="none"/><path d="M3 10l6 7m0-7l-6 7" stroke="#e00000" stroke-width="2"/></svg>
 <svg width="16" height="14" viewBox="0 0 16 14" style="margin-left:8px"><path d="M1 11h2v2H1zM4.500 8h2v5h-2zM8 6h2v7H8zM11.500 2h2v11h-2z" fill="#d8d8d8" stroke="#808080" stroke-width=".7"/></svg>
 <svg width="16" height="16" viewBox="0 0 16 16" style="margin-left:8px"><path d="M1 5h3l4-4v14l-4-4H1z" fill="#d0d0c8" stroke="#808080"/><path d="M10 4c2 2 2 6 0 8M12 2c3 3 3 9 0 12" fill="none" stroke="#909090"/></svg>
 <div class="clk">14:44<br>25/12/2015</div>
 <svg width="15" height="12" viewBox="0 0 15 12" style="margin-left:1px"><path d="M0 0h15v12H0z" fill="#3a78c8"/><path d="M0 0h15v5H0z" fill="#6aa8e8"/><path d="M0 8h15v2H0z" fill="#1a3870"/><path d="M1 8h3v2H1z" fill="#e0c040"/></svg></div>`);
def('ms-app',`:host{display:flex;flex-direction:column;width:1600px;height:900px;${DITHER}color:#000}
 .work{display:flex;height:744px;flex:none}.right{flex:1;display:flex;flex-direction:column;min-width:0}`,
 `<ms-titlebar></ms-titlebar><ms-menubar></ms-menubar><ms-toolbar></ms-toolbar>
 <div class="work"><ms-sidepanel></ms-sidepanel><div class="right"><ms-chart-title></ms-chart-title>
 <ms-chart><ms-tooltip>Habitat A<br>Date: 24/12/2015<br>Open: 36,290.00<br>High: 36,292.00<br>Low: 36,290.00<br>Close: 36,292.00<br>Volume: 0</ms-tooltip></ms-chart><ms-scrollrow></ms-scrollrow></div></div>
 <ms-drawbar></ms-drawbar><ms-statusbar></ms-statusbar><ms-taskbar></ms-taskbar>`);
</script></head><body><ms-app></ms-app></body></html>]]>
